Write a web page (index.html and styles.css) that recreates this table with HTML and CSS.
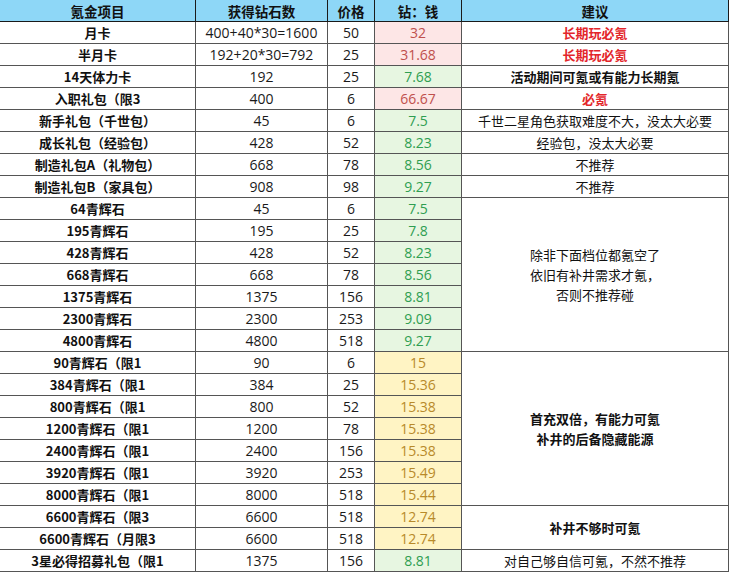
FILE: index.html
```html
<!DOCTYPE html>
<html lang="zh">
<head>
<meta charset="utf-8">
<title>氪金项目</title>
<link rel="stylesheet" href="styles.css">
</head>
<body>
<table class="sheet">
  <colgroup>
    <col class="c1"><col class="c2"><col class="c3"><col class="c4"><col class="c5">
  </colgroup>
  <thead>
    <tr><th>氪金项目</th><th>获得钻石数</th><th>价格</th><th>钻：钱</th><th>建议</th></tr>
  </thead>
  <tbody>
    <tr><td class="name">月卡</td><td class="num">400+40*30=1600</td><td class="num">50</td><td class="num pink">32</td><td class="note red">长期玩必氪</td></tr>
    <tr><td class="name">半月卡</td><td class="num">192+20*30=792</td><td class="num">25</td><td class="num pink">31.68</td><td class="note red">长期玩必氪</td></tr>
    <tr><td class="name">14天体力卡</td><td class="num">192</td><td class="num">25</td><td class="num green">7.68</td><td class="note bold">活动期间可氪或有能力长期氪</td></tr>
    <tr><td class="name">入职礼包（限3</td><td class="num">400</td><td class="num">6</td><td class="num pink">66.67</td><td class="note red">必氪</td></tr>
    <tr><td class="name">新手礼包（千世包）</td><td class="num">45</td><td class="num">6</td><td class="num green">7.5</td><td class="note">千世二星角色获取难度不大，没太大必要</td></tr>
    <tr><td class="name">成长礼包（经验包）</td><td class="num">428</td><td class="num">52</td><td class="num green">8.23</td><td class="note">经验包，没太大必要</td></tr>
    <tr><td class="name">制造礼包A（礼物包）</td><td class="num">668</td><td class="num">78</td><td class="num green">8.56</td><td class="note">不推荐</td></tr>
    <tr><td class="name">制造礼包B（家具包）</td><td class="num">908</td><td class="num">98</td><td class="num green">9.27</td><td class="note">不推荐</td></tr>
    <tr><td class="name">64青辉石</td><td class="num">45</td><td class="num">6</td><td class="num green">7.5</td><td class="note multi" rowspan="7">除非下面档位都氪空了<br>依旧有补井需求才氪，<br>否则不推荐碰</td></tr>
    <tr><td class="name">195青辉石</td><td class="num">195</td><td class="num">25</td><td class="num green">7.8</td></tr>
    <tr><td class="name">428青辉石</td><td class="num">428</td><td class="num">52</td><td class="num green">8.23</td></tr>
    <tr><td class="name">668青辉石</td><td class="num">668</td><td class="num">78</td><td class="num green">8.56</td></tr>
    <tr><td class="name">1375青辉石</td><td class="num">1375</td><td class="num">156</td><td class="num green">8.81</td></tr>
    <tr><td class="name">2300青辉石</td><td class="num">2300</td><td class="num">253</td><td class="num green">9.09</td></tr>
    <tr><td class="name">4800青辉石</td><td class="num">4800</td><td class="num">518</td><td class="num green">9.27</td></tr>
    <tr><td class="name">90青辉石（限1</td><td class="num">90</td><td class="num">6</td><td class="num yellow">15</td><td class="note multi bold" rowspan="7">首充双倍，有能力可氪<br>补井的后备隐藏能源</td></tr>
    <tr><td class="name">384青辉石（限1</td><td class="num">384</td><td class="num">25</td><td class="num yellow">15.36</td></tr>
    <tr><td class="name">800青辉石（限1</td><td class="num">800</td><td class="num">52</td><td class="num yellow">15.38</td></tr>
    <tr><td class="name">1200青辉石（限1</td><td class="num">1200</td><td class="num">78</td><td class="num yellow">15.38</td></tr>
    <tr><td class="name">2400青辉石（限1</td><td class="num">2400</td><td class="num">156</td><td class="num yellow">15.38</td></tr>
    <tr><td class="name">3920青辉石（限1</td><td class="num">3920</td><td class="num">253</td><td class="num yellow">15.49</td></tr>
    <tr><td class="name">8000青辉石（限1</td><td class="num">8000</td><td class="num">518</td><td class="num yellow">15.44</td></tr>
    <tr><td class="name">6600青辉石（限3</td><td class="num">6600</td><td class="num">518</td><td class="num yellow">12.74</td><td class="note bold" rowspan="2">补井不够时可氪</td></tr>
    <tr><td class="name">6600青辉石（月限3</td><td class="num">6600</td><td class="num">518</td><td class="num yellow">12.74</td></tr>
    <tr><td class="name">3星必得招募礼包（限1</td><td class="num">1375</td><td class="num">156</td><td class="num green">8.81</td><td class="note">对自己够自信可氪，不然不推荐</td></tr>
  </tbody>
</table>
</body>
</html>
```

FILE: styles.css
```css
html, body {
  margin: 0;
  padding: 0;
  background: #ffffff;
}

body {
  font-family: "Noto Sans CJK SC", "Open Sans", sans-serif;
  font-size: 13px;
  color: #111111;
}

.sheet {
  border-collapse: collapse;
  table-layout: fixed;
  width: 729px;
  margin-top: -1px;
  margin-left: -1px;
}

.c1 { width: 196px; }
.c2 { width: 132px; }
.c3 { width: 47px; }
.c4 { width: 87px; }
.c5 { width: 267px; }

.sheet th,
.sheet td {
  height: 21px;
  padding: 0;
  text-align: center;
  vertical-align: middle;
  border: 1px solid #555555;
  line-height: 20px;
  white-space: nowrap;
  overflow: hidden;
}

.sheet th {
  background: #8ed7f7;
  font-weight: bold;
  border-color: #1a1a1a;
  font-size: 13.5px;
}

.name {
  font-weight: bold;
}

.num {
  font-family: "Open Sans", "Noto Sans CJK SC", sans-serif;
  font-size: 14px;
  color: #1a1a1a;
}

.pink {
  background: #fde6e6;
  color: #c0504d;
}

.green {
  background: #e7f6e1;
  color: #2f9e52;
}

.yellow {
  background: #fff4c4;
  color: #b88a2a;
}

.note {
  color: #111111;
}

.red {
  color: #e3262b;
  font-weight: bold;
}

.bold {
  font-weight: bold;
}

.multi {
  line-height: 23px;
}
```
